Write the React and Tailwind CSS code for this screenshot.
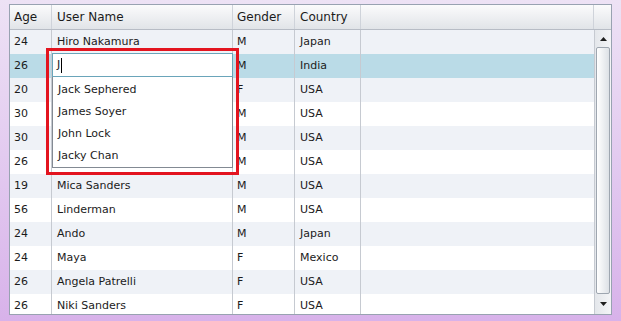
import React from 'react';

const rows = [
  { age: '24', name: 'Hiro Nakamura', gender: 'M', country: 'Japan' },
  { age: '26', name: '', gender: 'M', country: 'India', selected: true },
  { age: '20', name: '', gender: 'F', country: 'USA' },
  { age: '30', name: '', gender: 'M', country: 'USA' },
  { age: '30', name: '', gender: 'M', country: 'USA' },
  { age: '26', name: '', gender: 'M', country: 'USA' },
  { age: '19', name: 'Mica Sanders', gender: 'M', country: 'USA' },
  { age: '56', name: 'Linderman', gender: 'M', country: 'USA' },
  { age: '24', name: 'Ando', gender: 'M', country: 'Japan' },
  { age: '24', name: 'Maya', gender: 'F', country: 'Mexico' },
  { age: '26', name: 'Angela Patrelli', gender: 'F', country: 'USA' },
  { age: '26', name: 'Niki Sanders', gender: 'F', country: 'USA' },
];

const suggestions = ['Jack Sephered', 'James Soyer', 'John Lock', 'Jacky Chan'];

const HeaderCell = ({ label, className }) => (
  <div className={`h-full flex items-center border-r border-[#cfd3da] ${className}`}>{label}</div>
);

const Row = ({ row, index }) => {
  const bg = row.selected ? 'bg-[#badbe7]' : index % 2 === 0 ? 'bg-[#eff2f7]' : 'bg-white';
  return (
    <div className={`flex h-[24px] shrink-0 ${bg}`}>
      <div className="w-[42px] pl-[4px] flex items-center border-r border-[#c6cad1]">{row.age}</div>
      <div className="w-[181px] pl-[5px] flex items-center border-r border-[#c6cad1]">{row.name}</div>
      <div className="w-[62px] pl-[4px] flex items-center border-r border-[#c6cad1]">{row.gender}</div>
      <div className="w-[66px] pl-[5px] flex items-center border-r border-[#c6cad1]">{row.country}</div>
      <div className="flex-1" />
    </div>
  );
};

const ScrollBar = () => (
  <div className="w-[17px] flex flex-col border-l border-[#c6cad1] bg-gradient-to-r from-[#e4e7eb] to-[#f4f5f7]">
    <div className="h-[17px] flex items-center justify-center shrink-0">
      <svg width="7" height="4" viewBox="0 0 7 4"><path d="M3.5 0 L7 4 L0 4 Z" fill="#1f1f1f" /></svg>
    </div>
    <div className="flex-1 px-[1px]">
      <div className="h-full rounded-[2px] border border-[#9ea6b0] bg-gradient-to-r from-white to-[#dde1e6]" />
    </div>
    <div className="h-[20px] flex items-center justify-center shrink-0">
      <svg width="7" height="4" viewBox="0 0 7 4"><path d="M0 0 L7 0 L3.5 4 Z" fill="#1f1f1f" /></svg>
    </div>
  </div>
);

export default function App() {
  return (
    <div
      className="w-[621px] h-[321px] pt-[4px] pl-[9px] bg-gradient-to-b from-[#ede2f5] to-[#d8b2ea] text-[11px] text-[#1b1b1b] relative"
      style={{ fontFamily: '"DejaVu Sans", Verdana, sans-serif' }}
    >
      <div className="w-[603px] h-[311px] border border-[#98a2b1] bg-white flex flex-col overflow-hidden">
        {/* header */}
        <div className="h-[25px] shrink-0 flex border-b border-[#b7bcc5] bg-gradient-to-b from-[#fbfbfc] to-[#e1e4e8] text-[12px]">
          <HeaderCell label="Age" className="w-[42px] pl-[4px]" />
          <HeaderCell label="User Name" className="w-[181px] pl-[5px]" />
          <HeaderCell label="Gender" className="w-[62px] pl-[4px]" />
          <HeaderCell label="Country" className="w-[66px] pl-[5px]" />
          <HeaderCell label="" className="flex-1" />
          <div className="w-[17px]" />
        </div>
        {/* body */}
        <div className="flex-1 flex min-h-0">
          <div className="flex-1 flex flex-col overflow-hidden">
            {rows.map((r, i) => (
              <Row key={i} row={r} index={i} />
            ))}
          </div>
          <ScrollBar />
        </div>
      </div>

      {/* autocomplete editor */}
      <div className="absolute left-[46px] top-[48px] w-[193px] h-[127px] border-[3px] border-[#e3141f]" />
      <div className="absolute left-[52px] top-[53px] w-[181px]">
        <div className="h-[24px] border border-[#6aa5ba] bg-white flex items-center pl-[4px]">
          <span>J</span>
          <span className="w-[1px] h-[15px] bg-black ml-[1px]" />
        </div>
        <div className="border border-t-0 border-[#838a93] bg-white pt-[2px]">
          {suggestions.map((s) => (
            <div key={s} className="h-[22px] flex items-center pl-[5px]">{s}</div>
          ))}
        </div>
      </div>
    </div>
  );
}
